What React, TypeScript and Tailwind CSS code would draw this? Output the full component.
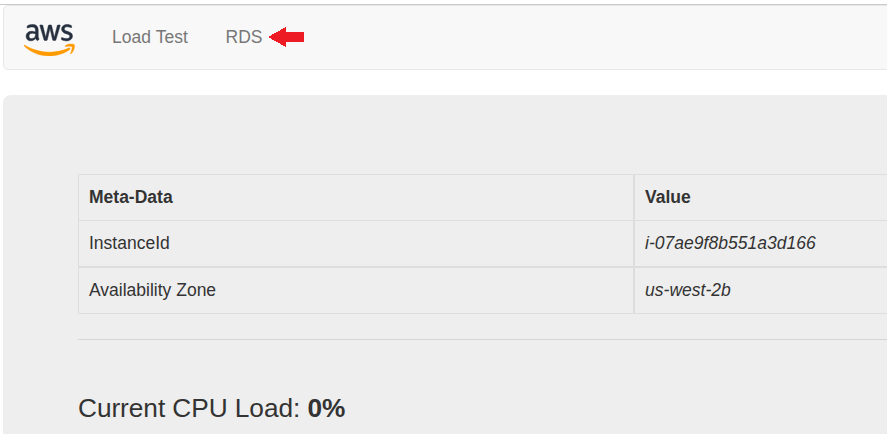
import { SiAmazonwebservices } from "react-icons/si";

const rows = [
  { label: "InstanceId", value: "i-07ae9f8b551a3d166" },
  { label: "Availability Zone", value: "us-west-2b" },
];

function AwsLogo() {
  return (
    <div className="ml-[20px] mt-[13px] h-[42px] w-[51px] shrink-0">
      <svg width="0" height="0" className="absolute">
        <defs>
          <linearGradient id="aws-colors" gradientUnits="userSpaceOnUse" x1="0" y1="0" x2="0" y2="24">
            <stop offset="0.552" stopColor="#252f3e" />
            <stop offset="0.552" stopColor="#ff9900" />
          </linearGradient>
        </defs>
      </svg>
      <SiAmazonwebservices
        preserveAspectRatio="none"
        viewBox="0 4.6 24.2 14.6"
        className="mt-[5px] h-[32px] w-[51px] [fill:url(#aws-colors)] [stroke-width:0.22] [stroke:url(#aws-colors)]"
      />
    </div>
  );
}

function Arrow() {
  return (
    <svg width="36" height="22" viewBox="0 0 36 22" className="ml-[6px] mt-[20px]" shapeRendering="crispEdges">
      <path d="M0 11 18 1V6H36V16H18V21Z" fill="#ed1c24" />
    </svg>
  );
}

export default function App() {
  return (
    <div className="h-[434px] w-full overflow-hidden bg-white pt-[4px] font-['Liberation_Sans',Arial,sans-serif] text-[17.5px] leading-[25px] text-[#333]">
      <div className="h-px bg-[#c9c9c9]" />
      <nav className="ml-[3px] flex h-[65px] w-[1000px] items-start rounded-[5px] border border-[#e7e7e7] bg-[#f8f8f8] text-[#777]">
        <AwsLogo />
        <a className="ml-[37px] mt-[19px] w-[77px] whitespace-nowrap tracking-[0.03px]">Load Test</a>
        <a className="ml-[36.5px] mt-[19px] w-[36.5px]">RDS</a>
        <Arrow />
      </nav>
      <main className="ml-[3px] mt-[25px] h-[500px] w-[1000px] rounded-[8px] bg-[#eee] pl-[75px] pt-[79px]">
        <div className="h-[140px] border border-[#ddd]">
          <div className="flex h-[45px] font-bold">
            <div className="w-[554px] pl-[10px] pt-[10px]">Meta-Data</div>
            <div className="border-l-2 border-[#ddd] pl-[10px] pt-[10px]">Value</div>
          </div>
          {rows.map((r, i) => (
            <div key={r.label} className={i === 0 ? "flex h-[46px] border-t border-[#ddd]" : "flex h-[47px] border-t-2 border-[#ddd]"}>
              <div className="w-[554px] pl-[10px] pt-[10px]">{r.label}</div>
              <div className="border-l-2 border-[#ddd] pl-[10px] pt-[10px] italic tracking-[0.03px]">{r.value}</div>
            </div>
          ))}
        </div>
        <div className="mt-[25px] h-px bg-[#d5d5d5]" />
        <h3 className="mt-[53px] text-[26.25px] leading-[30px] tracking-[-0.06px]">
          Current CPU Load: <b>0%</b>
        </h3>
      </main>
    </div>
  );
}
